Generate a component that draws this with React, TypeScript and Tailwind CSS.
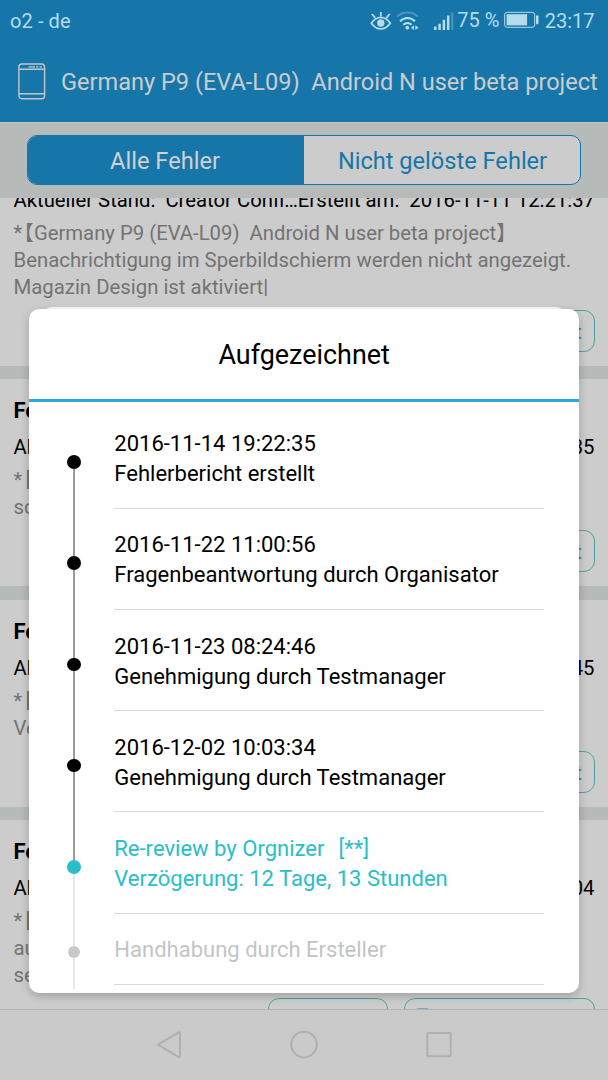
import clsx from 'clsx';

interface Issue {
  title: string;
  status: string;
  created: string;
  intro: string;
  lines: string[];
}

interface Step {
  top?: string;
  tag?: string;
  bottom: string;
  state: 'done' | 'current' | 'pending';
}

const issues: Issue[] = [
  {
    title: '',
    status: 'Aktueller Stand:  Creator Confi…',
    created: 'Erstellt am:  2016-11-11 12:21:37',
    intro: '【Germany P9 (EVA-L09)  Android N user beta project】',
    lines: ['Benachrichtigung im Sperbildschierm werden nicht angezeigt.', 'Magazin Design ist aktiviert|'],
  },
  { title: 'Fe', status: 'Ak', created: '35', intro: '【', lines: ['sc'] },
  { title: 'Fe', status: 'Ak', created: '45', intro: '【', lines: ['Ve'] },
  { title: 'Fe', status: 'Ak', created: '04', intro: '【', lines: ['au', 'se'] },
];

const steps: Step[] = [
  { top: '2016-11-14 19:22:35', bottom: 'Fehlerbericht erstellt', state: 'done' },
  { top: '2016-11-22 11:00:56', bottom: 'Fragenbeantwortung durch Organisator', state: 'done' },
  { top: '2016-11-23 08:24:46', bottom: 'Genehmigung durch Testmanager', state: 'done' },
  { top: '2016-12-02 10:03:34', bottom: 'Genehmigung durch Testmanager', state: 'done' },
  { top: 'Re-review by Orgnizer', tag: '[**]', bottom: 'Verzögerung: 12 Tage, 13 Stunden', state: 'current' },
  { bottom: 'Handhabung durch Ersteller', state: 'pending' },
];

function StatusBar() {
  return (
    <div className="flex h-[42px] items-center justify-between pl-[10px] pr-[13.500px] text-[20px] text-[#b5dcea]">
      <span className="tracking-[0.1px]">o2 - de</span>
      <div className="flex items-center">
        {/* Eye comfort, wifi, signal */}
        <svg className="-mt-[1px]" width="84" height="24" viewBox="0 0 84 24" fill="none" stroke="#b5dcea" strokeWidth="1.800">
          <path d="M1.300 14.200C4.500 9.800 7.500 8.400 10.800 8.400s6.300 1.400 9.500 5.800c-3.200 4.400-6.200 5.700-9.500 5.700s-6.300-1.300-9.500-5.700Z" />
          <circle cx="10.800" cy="14" r="3.700" fill="#b5dcea" stroke="none" />
          <path d="M10.800 7.500V3M5.200 8.900 2 5M16.400 8.900 19.600 5" />
          <path d="M27 7.700c6-5.600 15-5.600 21 0" stroke="#4a98bf" />
          <path d="M30 12.200c4.500-4.300 10.500-4.300 15 0M33.300 15.800c2.600-2.300 5.800-2.300 8.400 0" strokeWidth="2" />
          <circle cx="37.300" cy="18.700" r="1.900" fill="#b5dcea" stroke="none" />
          <path d="M44 16.300v4.800L41 18.700ZM45.300 16.300v4.800l3.200-2.400Z" fill="#b5dcea" stroke="none" />
          <path d="M65.300 17.500v3.400M69.600 14.700v6.200M73.900 10.800v10.100M78.200 6.500v14.400" strokeWidth="2.500" />
          <path d="M82.300 3.200v17.700" stroke="#4a98bf" strokeWidth="2" />
        </svg>
        <span className="ml-[3px] -mt-[3px] w-[42px] whitespace-nowrap">75 %</span>
        <svg className="ml-[5px] -mt-[2px]" width="36" height="18" viewBox="0 0 36 18" fill="none" stroke="#b5dcea">
          <rect x="0.700" y="1.300" width="30" height="15" rx="2.500" />
          <rect x="2.600" y="3.200" width="20.500" height="11.200" fill="#b5dcea" stroke="none" />
          <rect x="32" y="4.300" width="2.500" height="9" rx="1" fill="#b5dcea" stroke="none" />
        </svg>
        <span className="ml-[4.500px]">23:17</span>
      </div>
    </div>
  );
}

function Header() {
  return (
    <div className="flex h-[79px] items-center pl-[18px] text-[23.550px] text-[#cccccc]">
      <svg width="28" height="37" viewBox="0 0 28 37" fill="none" stroke="#c2c7ca" strokeWidth="1.400" className="shrink-0">
        <rect x="0.900" y="1" width="25.700" height="34.700" rx="3" />
        <path d="M1 6.300h25.500M1 30.800h25.500" />
        <path d="M10.500 3.900h6.500M18 3.900h2.300M21.500 3.900h2.500" strokeWidth="1.100" />
      </svg>
      <span className="ml-[15px] mt-[2px] whitespace-pre">Germany P9 (EVA-L09)  Android N user beta project</span>
    </div>
  );
}

function Tabs() {
  return (
    <div className="h-[76.500px] shrink-0 border-t border-[#c4c4c4] bg-[#b6bab9] px-[27px] pt-[12.400px]">
      <div className="flex h-[50px] overflow-hidden rounded-[10px] border border-[#1776a9] bg-[#cccccc] text-[23.600px]">
        <div className="flex w-[276px] items-center justify-center bg-[#1776a9] pt-[3px] pr-[2px] text-[#d0d0d0]">
          Alle Fehler
        </div>
        <div className="flex flex-1 items-center justify-center pt-[3px] pl-[1px] text-[#1776a9]">
          Nicht gelöste Fehler
        </div>
      </div>
    </div>
  );
}

function IssueCard({ issue }: { issue: Issue }) {
  return (
    <div>
      <div className="px-[13.500px] pb-[14px] pt-[13px]">
        <h3 className="h-[36px] text-[22px] leading-[37px] font-bold text-black">{issue.title}</h3>
        <div className="flex h-[37px] justify-between whitespace-pre text-[20.300px] leading-[38px] text-black">
          <span>{issue.status}</span>
          <span>{issue.created}</span>
        </div>
        <div className="mt-[2.200px] whitespace-pre text-[20.350px] leading-[27px] text-[#737373]">
          <p className="flex text-[20.300px]">
            <span>*</span>
            {/* Half-width lenticular brackets */}
            <span className="ml-[1.500px] [font-feature-settings:'halt']">{issue.intro}</span>
          </p>
          {issue.lines.map((line) => (
            <p key={line}>{line}</p>
          ))}
        </div>
        <div className="mt-[8.800px] flex justify-end gap-[16px]">
          <div className="h-[42px] w-[120px] rounded-[11px] border border-[#4fa39f]" />
          <div className="flex h-[42px] w-[191px] items-center justify-between rounded-[11px] border border-[#4fa39f] pl-[10px] pr-[12px] text-[20.300px] font-medium text-[#26948f]">
            <span className="h-[22px] w-[15px] rounded-sm border-2 border-[#7fa9bc]" />
            <span className="pt-[2px]">Aufgezeichnet</span>
          </div>
        </div>
      </div>
      <div className="h-[13.500px] bg-[#b6bab9]" />
    </div>
  );
}

function TimelineRow({ step, first }: { step: Step; first: boolean }) {
  const pending = step.state === 'pending';
  return (
    <div className={clsx('flex', pending ? 'h-[75.500px]' : 'h-[101.250px]')}>
      {/* Rail */}
      <div className="flex w-[85px] shrink-0 flex-col items-center pl-[4.200px]">
        <div
          className={clsx(
            'w-[2px]',
            pending ? 'h-[32.300px] bg-[#e6e6e6]' : 'h-[47.800px]',
            !pending && (first ? 'bg-transparent' : 'bg-[#9a9a9a]'),
          )}
        />
        <div
          className={clsx(
            'shrink-0 rounded-full',
            step.state === 'done' && 'size-[13.500px] bg-black',
            step.state === 'current' && 'size-[13.500px] bg-[#29bec8]',
            pending && 'size-[12.500px] bg-[#c8c8c8]',
          )}
        />
        <div className={clsx('w-[2px] flex-1', step.state === 'done' ? 'bg-[#9a9a9a]' : 'bg-[#e6e6e6]')} />
      </div>
      {/* Text */}
      <div
        className={clsx(
          'mr-[35px] flex-1 whitespace-pre border-b border-[#d9d9d9] pt-[21.800px] text-[22.030px] leading-[30px]',
          step.state === 'done' && 'text-black',
          step.state === 'current' && 'text-[#29bec8]',
          pending && 'mb-[4px] text-[#c4c4c4]',
        )}
      >
        {step.top && (
          <p>
            {step.top}
            {step.tag && <span className="ml-[14px]">{step.tag}</span>}
          </p>
        )}
        <p>{step.bottom}</p>
      </div>
    </div>
  );
}

function HistoryDialog() {
  return (
    <div className="absolute left-[29.300px] top-[306.700px] w-[549.700px]">
      {/* Edge of the sheet behind the dialog */}
      <div className="mx-[13px] h-[20px] rounded-t-[10px] bg-[#fafafa]" />
      <div className="-mt-[17.700px] h-[684.200px] overflow-hidden rounded-[10px] bg-white shadow-[0_3px_10px_rgba(0,0,0,0.22)]">
        <div className="flex h-[89.700px] items-center justify-center pt-[3px] text-[26.900px] text-black">Aufgezeichnet</div>
        <div className="h-[3.500px] bg-[#2da9df]" />
        <div className="pt-[5.200px]">
          {steps.map((step, i) => (
            <TimelineRow key={i} step={step} first={i === 0} />
          ))}
        </div>
      </div>
    </div>
  );
}

function NavBar() {
  return (
    <div className="h-[71px] shrink-0 border-t border-[#b2b2b2] bg-[#cacaca]">
      <svg width="608" height="70" viewBox="0 0 608 70" fill="none" stroke="#b0b0b0" strokeWidth="2" strokeLinejoin="round">
        <path d="M157.800 34.700 178.800 22.300a.8.800 0 0 1 1.200.700v23.400a.8.800 0 0 1-1.200.700Z" />
        <circle cx="304" cy="34.600" r="12.800" />
        <rect x="427.300" y="23" width="23.400" height="23.200" rx="1" />
      </svg>
    </div>
  );
}

export default function App() {
  return (
    <div className="relative flex h-[1080px] w-[608px] flex-col overflow-hidden bg-[#cccccc] font-['Roboto','Noto_Sans_CJK_SC',sans-serif]">
      <div className="h-[121.500px] shrink-0 bg-[#1776a9]">
        <StatusBar />
        <Header />
      </div>
      <Tabs />
      <div className="min-h-0 flex-1 overflow-hidden">
        {/* List scrolled part way into the first entry */}
        <div className="-mt-[66.200px]">
          {issues.map((issue, i) => (
            <IssueCard key={i} issue={issue} />
          ))}
        </div>
      </div>
      <NavBar />
      <HistoryDialog />
    </div>
  );
}
